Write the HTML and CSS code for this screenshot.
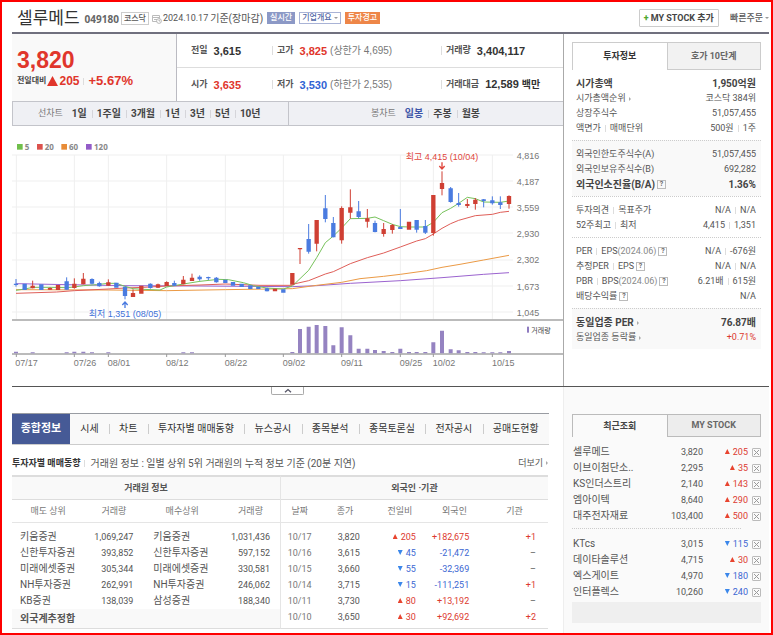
FILE: index.html
```html
<!DOCTYPE html>
<html lang="ko">
<head>
<meta charset="utf-8">
<meta name="viewport" content="width=device-width, initial-scale=1">
<title>셀루메드 049180</title>
<link rel="stylesheet" href="styles.css">
</head>
<body>
<div class="page">
  <header class="head">
    <h1>셀루메드</h1>
    <strong class="code">049180</strong>
    <span class="market">코스닥</span>
    <svg class="cal" viewBox="0 0 10 10" aria-hidden="true"><path d="M.5 1.5h7v6h-7zM.5 3.5h7M2 5.5h3" fill="none" stroke="#bbb"/><circle cx="7" cy="7" r="2.4" fill="#fff" stroke="#aaa" stroke-width=".8"/><path d="M7 5.6V7h1.2" fill="none" stroke="#999" stroke-width=".7"/></svg>
    <span class="date">2024.10.17</span>
    <span class="basis">기준(장마감)</span>
    <span class="badge live">실시간</span>
    <button class="badge outline" type="button">기업개요<i class="caret"></i></button>
    <span class="badge warn">투자경고</span>
    <button class="add" type="button"><b>+</b> MY STOCK 추가</button>
    <button class="order" type="button">빠른주문<i class="caret"></i></button>
  </header>

  <section class="top">
    <div class="left">
      <div class="quote">
        <div class="price">
          <strong class="now">3,820</strong>
          <p class="diff"><span>전일대비</span><svg viewBox="0 0 11 10" aria-hidden="true"><path d="M5.500 0 11 10H0z" fill="#e0362c"/></svg><b>205</b><i class="sep"></i><b class="rate">+5.67%</b></p>
        </div>
        <dl class="stats">
          <div><dt>전일</dt><dd>3,615</dd></div>
          <div><dt>고가</dt><dd class="up">3,825</dd><dd class="limit">(상한가 4,695)</dd></div>
          <div><dt>거래량</dt><dd>3,404,117</dd></div>
          <div><dt>시가</dt><dd class="up">3,635</dd></div>
          <div><dt>저가</dt><dd class="down">3,530</dd><dd class="limit">(하한가 2,535)</dd></div>
          <div><dt>거래대금</dt><dd>12,589 <small>백만</small></dd></div>
        </dl>
      </div>
      <div class="periods">
        <div class="line"><span>선차트</span>
          <ul><li><a href="#">1일</a></li><li><a href="#">1주일</a></li><li><a href="#">3개월</a></li><li><a href="#">1년</a></li><li><a href="#">3년</a></li><li><a href="#">5년</a></li><li><a href="#">10년</a></li></ul>
        </div>
        <div class="candle"><span>봉차트</span>
          <ul><li><a href="#" class="on">일봉</a></li><li><a href="#">주봉</a></li><li><a href="#">월봉</a></li></ul>
        </div>
      </div>
      <svg class="chart" viewBox="0 0 1653 780" role="img" aria-label="일봉">
        <!-- grid -->
        <path class="grid" d="M0 87H1503M0 165H1503M0 243H1503M0 321H1503M0 402H1503M0 480H1503M0 558H1503M13 87V580M187 87V580M289 87V580M464 87V580M640 87V580M814 87V580M989 87V580M1165 87V580M1264 87V580M1441 87V580"/>
        <path class="axis" d="M0 582H1653M0 684H1653"/>
        <path class="tick" d="M13 684v9M187 684v9M289 684v9M464 684v9M640 684v9M814 684v9M989 684v9M1165 684v9M1264 684v9M1441 684v9"/>
        <!-- volume -->
        <g class="vol">
          <path transform="translate(-36 12)" d="M48 670v-5M98 670v-3M200 670v-3M223 670v-5M250 670v-5M276 670v-3M325 670v-3M550 670v-3M576 670v-3"/>
          <path transform="translate(804 12)" d="M37 670v-4M60 670V597M86 670V590M110 670V585M136 670V588M160 670V646M185 670V592M211 670V616M236 670V656M262 670V656M285 670V660M311 670V663M337 670V666M361 670V656M387 670V666M410 670V666M436 670V666M460 670V637M486 670V602M512 670V658M536 670V661M562 670V666M586 670V666M611 670V667M637 670V667M661 670V667M687 670V663"/>
        </g>
        <!-- moving averages, first half -->
        <g class="avg" transform="translate(-36 12)">
          <path stroke="#9b63cf" d="M48 461 200 464 375 467 600 468 877 470"/>
          <path stroke="#eb9a45" d="M48 479 325 480 500 482 676 479 877 476"/>
          <path stroke="#df5e58" d="M48 490 170 486 223 482 325 477 375 474 430 472 500 468 600 465 676 462 780 466 877 466"/>
          <path stroke="#77c25b" d="M48 481 74 477 98 472 150 472 200 473 223 471 250 467 290 464 325 460 349 460 375 469 399 476 430 478 480 480 500 471 550 462 600 454 655 448 685 449 730 458 760 467 800 474 850 477 877 468"/>
        </g>
        <!-- moving averages, second half -->
        <g class="avg" transform="translate(804 12)">
          <path stroke="#9b63cf" d="M37 470 110 467 211 460 361 452 486 443 611 433 687 428"/>
          <path stroke="#eb9a45" d="M37 476 110 466 185 457 240 446 311 439 361 433 440 422 486 412 540 403 611 390 687 376"/>
          <path stroke="#df5e58" d="M37 463 86 452 136 432 160 425 211 401 262 383 311 369 361 351 410 333 436 326 460 312 486 295 512 281 536 271 586 257 637 253 661 247 687 244"/>
          <path stroke="#77c25b" d="M37 468 60 446 86 421 110 383 136 338 160 318 185 294 211 266 262 265 285 261 311 272 337 283 361 290 387 291 436 291 460 277 486 248 512 235 536 220 562 202 586 206 611 216 661 217 687 213"/>
        </g>
        <!-- candles, first half -->
        <g transform="translate(-36 12)">
          <path class="wick fall" d="M48 447V470M200 442V479M276 445V463M298 455V470M375 470V508M451 460V476M523 452V468M599 436V452M625 440V450M649 441V458M801 473V484"/>
          <path class="wick rise" d="M98 452V475M150 472V480M223 445V476M250 429V463M325 448V467M399 478V501M474 461V474M500 454V468M550 438V463M576 431V453"/>
          <path class="body fall" d="M48 461V465M74 461V480M124 463V480M200 454V479M276 447V461M298 459V469M349 458V473M375 470V498M451 461V474M523 459V467M599 440V448M625 441V445M649 443V457M676 449V459M699 456V467M725 461V471M751 466V477M775 470V477M801 475V484M850 478V488"/>
          <path class="body rise" d="M98 467V475M150 474V479M174 465V480M223 461V474M250 446V463M325 457V467M399 489V501M424 467V491M474 463V473M500 456V468M550 449V463M576 443V453M825 476V484"/>
          <path class="arrow" stroke="#4a7be0" d="M375 534V518M367 525 375 516 383 525"/>
        </g>
        <!-- candles, second half -->
        <g transform="translate(804 12)">
          <path class="wick fall" d="M86 282V371M136 195V277M160 261V322M236 213V265M285 272V307M361 237V297M410 270V308M436 270V312M512 171V218M536 189V230M611 207V232M637 199V224M661 199V237"/>
          <path class="wick rise" d="M60 355V402M110 270V364M185 229V341M211 178V266M262 237V293M311 279V320M337 282V311M460 195V317M486 124V196M562 207V234M586 204V239M687 196V236"/>
          <path class="body fall" d="M86 327V365M136 235V267M160 279V322M236 244V261M285 279V306M361 291V297M410 270V299M436 288V308M512 175V216M536 219V225M611 208V213M637 211V220M661 217V225"/>
          <path class="body rise" d="M37 429V464M60 354V358M110 270V341M185 234V331M211 232V248M262 265V275M311 297V312M337 285V300M387 275V299M460 195V309M486 159V177M562 222V228M586 209V222M687 198V222"/>
          <path class="arrow" stroke="#e0463c" d="M486 97V115M478 108 486 117 494 108"/>
        </g>
        <!-- legend and labels -->
        <g class="legend">
          <rect x="15" y="54" width="17" height="17" fill="#70bf4b"/><text x="38" y="72">5</text>
          <rect x="75" y="54" width="17" height="17" fill="#dc524d"/><text x="98" y="72">20</text>
          <rect x="148" y="54" width="17" height="17" fill="#e88c37"/><text x="171" y="72">60</text>
          <rect x="222" y="54" width="17" height="17" fill="#935cc8"/><text x="246" y="72">120</text>
        </g>
        <g class="scale">
          <text x="1514" y="98">4,816</text><text x="1514" y="176">4,187</text><text x="1514" y="254">3,559</text><text x="1514" y="332">2,930</text><text x="1514" y="412">2,302</text><text x="1514" y="491">1,673</text><text x="1514" y="569">1,045</text>
          <text x="10" y="720">07/17</text><text x="185" y="720">07/26</text><text x="287" y="720">08/01</text><text x="462" y="720">08/12</text><text x="638" y="720">08/22</text><text x="812" y="720">09/02</text><text x="987" y="720">09/11</text><text x="1163" y="720">09/25</text><text x="1262" y="720">10/02</text><text x="1440" y="720">10/15</text>
          <text x="1181" y="103" fill="#e0463c">최고 4,415 (10/04)</text>
          <text x="230" y="573" fill="#3f72d8">최저 1,351 (08/05)</text>
          <rect x="1545" y="602" width="6" height="18" fill="#8f7cc0"/>
          <text class="vlabel" x="1558" y="620">거래량</text>
        </g>
      </svg>
    </div>

    <aside class="side">
      <div class="tabs"><button type="button" class="on">투자정보</button><button type="button">호가 10단계</button></div>
      <dl class="info">
        <div class="strong"><dt>시가총액</dt><dd>1,950억원</dd></div>
        <div><dt>시가총액순위<i class="more"></i></dt><dd>코스닥 384위</dd></div>
        <div><dt>상장주식수</dt><dd>51,057,455</dd></div>
        <div><dt>액면가<i class="sep"></i>매매단위</dt><dd>500원<i class="sep"></i>1주</dd></div>
      </dl>
      <dl class="info shade">
        <div><dt>외국인한도주식수(A)</dt><dd>51,057,455</dd></div>
        <div><dt>외국인보유주식수(B)</dt><dd>692,282</dd></div>
        <div class="strong"><dt>외국인소진율(B/A)<button class="help" type="button">?</button></dt><dd>1.36%</dd></div>
      </dl>
      <dl class="info">
        <div><dt>투자의견<i class="sep"></i>목표주가</dt><dd>N/A<i class="sep"></i>N/A</dd></div>
        <div><dt>52주최고<i class="sep"></i>최저</dt><dd>4,415<i class="sep"></i>1,351</dd></div>
      </dl>
      <dl class="info">
        <div><dt>PER<i class="sep"></i>EPS<em>(2024.06)</em><button class="help" type="button">?</button></dt><dd>N/A<i class="sep"></i>-676원</dd></div>
        <div><dt>추정PER<i class="sep"></i>EPS<button class="help" type="button">?</button></dt><dd>N/A<i class="sep"></i>N/A</dd></div>
        <div><dt>PBR<i class="sep"></i>BPS<em>(2024.06)</em><button class="help" type="button">?</button></dt><dd>6.21배<i class="sep"></i>615원</dd></div>
        <div><dt>배당수익률<button class="help" type="button">?</button></dt><dd>N/A</dd></div>
      </dl>
      <dl class="info shade">
        <div class="strong"><dt>동일업종 PER<i class="more"></i></dt><dd>76.87배</dd></div>
        <div><dt>동일업종 등락률<i class="more"></i></dt><dd class="up">+0.71%</dd></div>
      </dl>
    </aside>
  </section>

  <section class="bottom">
    <div class="left">
      <button class="fold" type="button" aria-label="접기"><svg viewBox="0 0 8 5" aria-hidden="true"><path d="M1 4.200 4 1.500 7 4.200" fill="none" stroke="#556" stroke-width="1.300"/></svg></button>
      <nav class="menu">
        <a class="on" href="#">종합정보</a>
        <ul><li><a href="#">시세</a></li><li><a href="#">차트</a></li><li><a href="#">투자자별 매매동향</a></li><li><a href="#">뉴스공시</a></li><li><a href="#">종목분석</a></li><li><a href="#">종목토론실</a></li><li><a href="#">전자공시</a></li><li><a href="#">공매도현황</a></li></ul>
      </nav>
      <div class="caption">
        <h2>투자자별 매매동향</h2><i class="sep"></i>
        <p>거래원 정보 : 일별 상위 5위 거래원의 누적 정보 기준 (20분 지연)</p>
        <a href="#">더보기<i class="more"></i></a>
      </div>
      <div class="tables">
        <table class="brokers">
          <colgroup><col class="c27"><col class="c22"><col class="c29"><col class="c22"></colgroup>
          <thead>
            <tr><th colspan="4">거래원 정보</th></tr>
            <tr><th>매도 상위</th><th>거래량</th><th>매수상위</th><th>거래량</th></tr>
          </thead>
          <tbody>
            <tr><td>키움증권</td><td>1,069,247</td><td>키움증권</td><td>1,031,436</td></tr>
            <tr><td>신한투자증권</td><td>393,852</td><td>신한투자증권</td><td>597,152</td></tr>
            <tr><td>미래에셋증권</td><td>305,344</td><td>미래에셋증권</td><td>330,581</td></tr>
            <tr><td>NH투자증권</td><td>262,991</td><td>NH투자증권</td><td>246,062</td></tr>
            <tr><td>KB증권</td><td>138,039</td><td>삼성증권</td><td>188,340</td></tr>
          </tbody>
          <tfoot><tr><th colspan="4">외국계추정합</th></tr></tfoot>
        </table>
        <table class="foreign">
          <colgroup><col class="c14"><col class="c20"><col class="c21"><col class="c20"><col class="c25"></colgroup>
          <thead>
            <tr><th colspan="5">외국인 ·기관</th></tr>
            <tr><th>날짜</th><th>종가</th><th>전일비</th><th>외국인</th><th>기관</th></tr>
          </thead>
          <tbody>
            <tr><td>10/17</td><td>3,820</td><td class="up"><i class="tri"></i>205</td><td class="up">+182,675</td><td class="up">+1</td></tr>
            <tr><td>10/16</td><td>3,615</td><td class="down"><i class="tri"></i>45</td><td class="down">-21,472</td><td>–</td></tr>
            <tr><td>10/15</td><td>3,660</td><td class="down"><i class="tri"></i>55</td><td class="down">-32,369</td><td>–</td></tr>
            <tr><td>10/14</td><td>3,715</td><td class="down"><i class="tri"></i>15</td><td class="down">-111,251</td><td class="up">+1</td></tr>
            <tr><td>10/11</td><td>3,730</td><td class="up"><i class="tri"></i>80</td><td class="up">+13,192</td><td>–</td></tr>
            <tr><td>10/10</td><td>3,650</td><td class="up"><i class="tri"></i>30</td><td class="up">+92,692</td><td class="up">+2</td></tr>
          </tbody>
        </table>
      </div>
    </div>

    <aside class="side">
      <div class="tabs recent"><button type="button" class="on">최근조회</button><button type="button">MY STOCK</button></div>
      <table class="stocks">
        <colgroup><col><col class="p"><col class="d"><col class="x"></colgroup>
        <tbody>
          <tr><td>셀루메드</td><td>3,820</td><td class="up"><i class="tri"></i>205</td><td><button class="del" type="button" aria-label="삭제"></button></td></tr>
          <tr><td>이브이첨단소..</td><td>2,295</td><td class="up"><i class="tri"></i>35</td><td><button class="del" type="button" aria-label="삭제"></button></td></tr>
          <tr><td>KS인더스트리</td><td>2,140</td><td class="up"><i class="tri"></i>143</td><td><button class="del" type="button" aria-label="삭제"></button></td></tr>
          <tr><td>엠아이텍</td><td>8,640</td><td class="up"><i class="tri"></i>290</td><td><button class="del" type="button" aria-label="삭제"></button></td></tr>
          <tr><td>대주전자재료</td><td>103,400</td><td class="up"><i class="tri"></i>500</td><td><button class="del" type="button" aria-label="삭제"></button></td></tr>
        </tbody>
      </table>
      <hr>
      <table class="stocks">
        <colgroup><col><col class="p"><col class="d"><col class="x"></colgroup>
        <tbody>
          <tr><td>KTcs</td><td>3,015</td><td class="down"><i class="tri"></i>115</td><td><button class="del" type="button" aria-label="삭제"></button></td></tr>
          <tr><td>데이타솔루션</td><td>4,715</td><td class="up"><i class="tri"></i>30</td><td><button class="del" type="button" aria-label="삭제"></button></td></tr>
          <tr><td>엑스게이트</td><td>4,970</td><td class="down"><i class="tri"></i>180</td><td><button class="del" type="button" aria-label="삭제"></button></td></tr>
          <tr><td>인터플렉스</td><td>10,260</td><td class="down"><i class="tri"></i>240</td><td><button class="del" type="button" aria-label="삭제"></button></td></tr>
        </tbody>
      </table>
      <div class="pager"></div>
    </aside>
  </section>
</div>
</body>
</html>
```
FILE: styles.css
```css
* { box-sizing: border-box; margin: 0; padding: 0; }
body {
  font-family: Roboto, "Noto Sans CJK KR", sans-serif;
  font-size: 9px;
  line-height: 15px;
  color: #555;
  background: #fff;
}
a { color: inherit; text-decoration: none; }
ul { list-style: none; }
i, em { font-style: normal; }
button { font: inherit; color: inherit; background: none; border: 0; white-space: nowrap; }
.page {
  display: flex;
  flex-direction: column;
  min-height: 100vh;
  border: 2px solid #fe0000;
}
.up { color: #dc3a30; }
.down { color: #3c66d2; }
.sep {
  display: inline-block;
  width: 1px;
  height: 7px;
  margin: 0 4px;
  background: #ddd;
}
.caret {
  display: inline-block;
  margin-left: 2px;
  border: 2px solid transparent;
  border-top-color: #999;
  border-bottom: 0;
  vertical-align: middle;
}
.more {
  display: inline-block;
  margin-left: 3px;
  border: 2px solid transparent;
  border-left-color: #aaa;
  border-right: 0;
  vertical-align: middle;
}

/* header */
.head {
  display: flex;
  align-items: center;
  height: 32px;
  margin: 0 2px 0 10px;
  padding: 2px 0 0 5px;
  border-bottom: 2px solid #70707e;
  white-space: nowrap;
}
.head h1 {
  font-size: 17px;
  font-weight: 400;
  line-height: 24px;
  color: #333;
}
.code {
  margin: 2px 2px 0 5px;
  font: bold 10px/15px "Noto Sans", sans-serif;
  color: #666;
}
.market {
  padding: 0 2px;
  border: 1px solid #ccc;
  font-size: 8px;
  font-weight: 500;
  line-height: 11px;
}
.cal { width: 10px; height: 10px; margin: 2px 1px 0 3px; }
.basis { margin: 0 4px 0 2px; font-size: 10px; }
.badge {
  margin-right: 4px;
  padding: 0 2px;
  border: 1px solid #8c99c6;
  background: #8c99c6;
  color: #fff;
  font-size: 8px;
  font-weight: 500;
  line-height: 10px;
}
.badge.outline { background: #fff; color: #5266a6; border-color: #a9b3d6; }
.badge.warn { background: #ee8648; border-color: #ee8648; }
.add {
  margin-left: auto;
  padding: 0 4px;
  height: 18px;
  border: 1px solid #ccc;
  border-radius: 1px;
  font-weight: 700;
  line-height: 16px;
  color: #444;
}
.add b { color: #51a830; }
.order { margin-left: 11px; font-weight: 500; }

/* quote and chart */
.top, .bottom { display: grid; grid-template-columns: 1fr 207px; }
.left { min-width: 0; padding-left: 10px; }
.top .left { border-right: 1px solid #aaa; }
.quote {
  display: grid;
  grid-template-columns: 165fr 386fr;
}
.price {
  padding: 13px 0 0 5px;
  background: #f9f9f9;
  border-right: 1px solid #bbbbc2;
  color: #e0362c;
}
.now {
  display: block;
  font: bold 23px/26px "Liberation Sans", sans-serif;
}
.diff { display: flex; align-items: center; line-height: 16px; }
.diff span { font-size: 8px; font-weight: 700; color: #444; }
.diff svg { width: 11px; height: 10px; margin: 0 1px; }
.diff b { font: bold 12px/16px "Liberation Sans", sans-serif; }
.diff .rate { font-size: 13px; }
.stats {
  display: grid;
  grid-template-columns: 95fr 169fr 122fr;
  grid-auto-rows: 33px;
  row-gap: 1px;
  background: linear-gradient(#ddd, #ddd) 0 33px / 100% 1px no-repeat;
}
.stats div {
  display: flex;
  align-items: center;
  padding-left: 5px;
  background: linear-gradient(#ddd, #ddd) 0 50% / 1px 9px no-repeat;
  white-space: nowrap;
}
.stats div:nth-child(3n+1) { padding-left: 14px; background: none; }
.stats dt { margin-right: 6px; font-size: 9px; font-weight: 700; }
.stats dd { font: bold 11px/16px "Liberation Sans", "Noto Sans CJK KR", sans-serif; color: #333; }
.stats small { font-size: 10px; }
.stats dd.up { color: #e0362c; }
.stats dd.down { color: #2f62d4; }
.stats dd.limit { margin-left: 3px; font-size: 10px; font-weight: 400; color: #777; }
.periods {
  display: grid;
  grid-template-columns: 1fr 1fr;
  height: 25px;
  border: 1px solid #c3c4ca;
  border-right: 0;
  background: #eff0f4;
  line-height: 23px;
}
.periods div { display: flex; color: #777; }
.periods .line { padding-left: 25px; }
.periods .candle { padding-left: 82px; border-left: 1px solid #c3c4ca; }
.periods ul { display: flex; margin-left: 4px; }
.periods li {
  padding: 0 5px;
  font-size: 10px;
  font-weight: 700;
  color: #444;
  background: linear-gradient(#d5d5da, #d5d5da) 0 50% / 1px 8px no-repeat;
}
.periods li:first-child { background: none; }
.periods .on { color: #3d55a8; }
.chart { display: block; width: 100%; }
.grid { stroke: #efefef; stroke-width: 3; fill: none; }
.axis { stroke: #a5a5a5; stroke-width: 4; }
.tick { stroke: #999; stroke-width: 3; }
.vol path { stroke: #9583c1; stroke-width: 12; }
.avg { fill: none; stroke-width: 3; stroke-linejoin: round; }
.wick { stroke-width: 3; }
.body { stroke-width: 13; }
.rise { stroke: #cf3f33; }
.fall { stroke: #4a7be0; }
.arrow { stroke-width: 4; fill: none; }
.legend { font: bold 24px "Noto Sans", sans-serif; fill: #888; }
.scale { font: 27px "Liberation Sans", "Noto Sans CJK KR", sans-serif; fill: #777; }
.vlabel { font-size: 21px; fill: #444; }

/* sidebar */
.side { min-width: 0; padding: 8px 10px 0 8px; }
.tabs { display: grid; grid-template-columns: 1fr 1fr; height: 28px; }
.tabs button {
  border: 1px solid #ccc;
  background: #f2f2f2;
  font-size: 9px;
  font-weight: 700;
  color: #666;
}
.tabs .on { border-width: 1px 0 0 1px; background: #fff; color: #333; }
.info { padding: 6px 5px 4px 4px; }
.info + .info { border-top: 1px dotted #ccc; }
.info div { display: flex; justify-content: space-between; white-space: nowrap; }
.info dt { display: flex; align-items: center; }
.info dd { display: flex; align-items: center; }
.info em { color: #888; }
.info .strong { font-size: 10px; font-weight: 700; color: #444; }
.shade { background: #f9f9f9; }
.help {
  width: 9px;
  height: 9px;
  margin-left: 2px;
  border: 1px solid #bbb;
  font-size: 7px;
  font-weight: 700;
  line-height: 7px;
  color: #666;
}

/* lower half */
.bottom {
  flex: 1;
  margin: 0 2px 0 10px;
  grid-template-columns: 1fr 206px;
  border-top: 1px solid #555;
}
.bottom .left { padding-left: 0; }
.bottom .side { padding: 27px 8px 0 8px; background: #fafafa; border-left: 1px solid #eee; }
.fold {
  display: block;
  width: 33px;
  height: 8px;
  margin: 0 auto 18px;
  border: 1px solid #aaa;
  border-top: 0;
  border-radius: 0 0 2px 2px;
  line-height: 0;
}
.fold svg { width: 8px; height: 5px; }
.menu {
  display: flex;
  height: 32px;
  margin-right: 14px;
  border: 1px solid #999ca2;
  border-width: 1px 0;
  border-bottom-color: #ccc;
  background: #f9f9f9;
  font-size: 10px;
  line-height: 30px;
  color: #333;
  white-space: nowrap;
}
.menu > .on {
  flex: 0 0 58px;
  background: #465a96;
  color: #fff;
  font-size: 11px;
  font-weight: 700;
  text-align: center;
}
.menu ul { display: flex; flex: 1; }
.menu li { flex: 1 1 auto; text-align: center; }
.menu li + li { background: linear-gradient(#ccc, #ccc) 0 50% / 1px 10px no-repeat; }
.caption {
  display: flex;
  align-items: center;
  height: 30px;
  margin-right: 15px;
  padding-top: 6px;
  font-size: 10px;
  white-space: nowrap;
}
.caption h2 { font-size: 9px; font-weight: 700; color: #333; }
.caption .sep { margin: 0 5px 0 4px; }
.caption a { margin-left: auto; font-size: 9px; }
.tables { display: grid; grid-template-columns: 1fr 1fr; align-items: start; margin-right: 15px; }
table { width: 100%; table-layout: fixed; border-collapse: separate; border-spacing: 0; }
td { white-space: nowrap; text-align: right; height: 16px; line-height: 16px; }
.tables table { border-top: 2px solid #ddd; }
.tables .foreign { border-left: 1px solid #e5e5e5; border-bottom: 1px solid #ddd; }
.tables thead th {
  height: 23px;
  line-height: 20px;
  border-bottom: 1px solid #e5e5e5;
  font-size: 9px;
  font-weight: 400;
  color: #777;
}
.tables thead tr:first-child th { background: #f9f9f9; font-weight: 700; color: #555; border-color: #ddd; }
.tables tbody tr:first-child td { height: 22px; padding-top: 6px; }
.brokers td { padding-right: 10px; }
.brokers td:nth-child(odd) { padding: 0 0 0 8px; text-align: left; font-size: 10px; }
.brokers td:nth-child(3) { padding-left: 10px; }
.brokers tfoot th {
  height: 20px;
  padding-left: 8px;
  border-bottom: 1px solid #ddd;
  background: #f9f9f9;
  font-size: 10px;
  line-height: 18px;
  text-align: left;
}
.foreign td { padding-right: 12px; }
.foreign tbody tr:last-child td { height: 19px; padding-bottom: 3px; }
.foreign td:first-child { padding-right: 0; text-align: center; color: #777; }
.c14 { width: 14%; }
.c20 { width: 20%; }
.c21 { width: 21%; }
.c22 { width: 22%; }
.c25 { width: 25%; }
.c27 { width: 27%; }
.c29 { width: 29%; }
.tri {
  display: inline-block;
  width: 5px;
  height: 5px;
  margin-right: 3px;
  background: #e8442f;
  clip-path: polygon(50% 0, 100% 100%, 0 100%);
  vertical-align: 1px;
}
.down .tri { background: #3b87ea; clip-path: polygon(0 0, 100% 0, 50% 100%); }
.recent { height: 23px; margin-bottom: 7px; }
.recent button { background: #ededed; border-color: #bbb; }
.recent .on { background: #fafafa; color: #444; }
.stocks td:first-child { text-align: left; font-size: 10px; padding-left: 1px; }
.stocks .p { width: 40px; }
.stocks .d { width: 45px; }
.stocks .x { width: 13px; }
.del {
  display: block;
  width: 9px;
  height: 9px;
  margin: 0 0 0 auto;
  border: 1px solid #bbb;
  border-radius: 1px;
  background:
    linear-gradient(45deg, transparent 42%, #999 42% 58%, transparent 58%) center / 5px 5px no-repeat,
    linear-gradient(-45deg, transparent 42%, #999 42% 58%, transparent 58%) center / 5px 5px no-repeat;
}
.bottom hr { margin: 4px 20px 7px 0; border: 0; border-top: 1px dotted #ccc; }
.pager { height: 21px; margin-top: 2px; background: #efefef; }
```
